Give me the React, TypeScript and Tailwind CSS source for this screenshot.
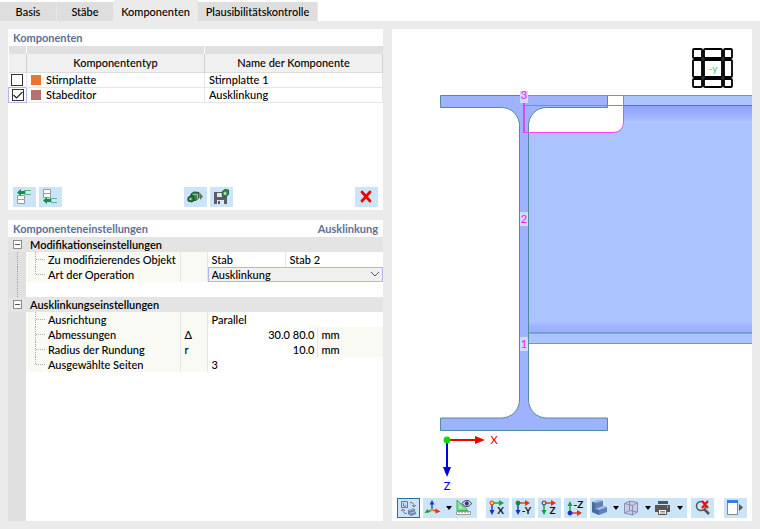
import { ReactNode, useState } from 'react'

type Component = {
  id: number
  type: string
  name: string
  color: string
  active: boolean
}

const tabs = [
  { label: 'Basis', width: 'w-[57px]' },
  { label: 'Stäbe', width: 'w-[57px]' },
  { label: 'Komponenten', width: 'w-[84px]' },
  { label: 'Plausibilitätskontrolle', width: 'w-[120px]' },
]

const initialComponents: Component[] = [
  { id: 1, type: 'Stirnplatte', name: 'Stirnplatte 1', color: 'bg-[#e87530]', active: false },
  { id: 2, type: 'Stabeditor', name: 'Ausklinkung', color: 'bg-[#b97070]', active: true },
]

function ToolButton({ label, pressed, children }: { label: string; pressed?: boolean; children: ReactNode }) {
  return (
    <button
      type="button"
      aria-label={label}
      aria-pressed={pressed}
      className={`block h-5 w-[23px] shrink-0 bg-[#cce4f7] hover:bg-[#b8daf5] ${pressed ? 'outline outline-1 -outline-offset-1 outline-[#2a6ca8]' : ''}`}
    >
      <svg viewBox="0 0 23 20" className="h-5 w-[23px]" fill="none">
        {children}
      </svg>
    </button>
  )
}

function MenuArrow({ label, className }: { label: string; className: string }) {
  return (
    <button type="button" aria-label={label} className={`flex h-5 shrink-0 items-center bg-[#cce4f7] ${className}`}>
      <svg viewBox="0 0 6 4" className="h-1 w-1.5">
        <path d="M0 0h6L3 4z" fill="#000" />
      </svg>
    </button>
  )
}

// Small coordinate cross, used by the four view direction buttons
function AxisIcon({ origin, ring, right, down, text, up }: { origin: string; ring: string; right: string; down: string; text: string; up?: boolean }) {
  const y = up ? 15 : 5
  return (
    <>
      <path d={`M6 ${y}h8`} stroke={right} strokeWidth="1.4" />
      <path d={`M13 ${y - 3}l5 3-5 3z`} fill={right} />
      {up ? (
        <>
          <path d="M6 15V7" stroke={down} strokeWidth="1.4" />
          <path d="M3.500 8L6 3l2.500 5z" fill={down} />
        </>
      ) : (
        <>
          <path d="M6 5v8" stroke={down} strokeWidth="1.4" />
          <path d="M3.500 12h5L6 17z" fill={down} />
        </>
      )}
      <circle cx="6" cy={y} r="2" fill={origin} stroke={ring} />
      <text x="14.500" y={up ? 10 : 16} textAnchor="middle" fontSize="10" fontWeight="700" fill="#111">
        {text}
      </text>
    </>
  )
}

function ComponentsPanel() {
  const [components, setComponents] = useState(initialComponents)

  const toggle = (id: number) => {
    setComponents(components.map((c) => (c.id === id ? { ...c, active: !c.active } : c)))
  }

  return (
    <section className="flex h-[181px] flex-col bg-white">
      <h2 className="h-[17px] px-[5px] font-bold leading-[17px] text-[#5d6f96]">Komponenten</h2>
      <table className="w-full table-fixed border-collapse">
        <colgroup>
          <col className="w-[18px]" />
          <col />
          <col />
        </colgroup>
        <thead>
          <tr className="h-2 bg-[#e0e0e0]">
            <td className="border-r border-white" />
            <td className="border-r border-white" />
            <td />
          </tr>
          <tr className="h-[18px] border-b border-[#dcdcdc] bg-[#f0f0f0]">
            <td className="border-r border-[#d0d0d0]" />
            <th className="border-r border-[#d0d0d0] p-0 font-medium">Komponententyp</th>
            <th className="border-r border-[#d0d0d0] p-0 font-medium">Name der Komponente</th>
          </tr>
        </thead>
        <tbody>
          {components.map((c) => (
            <tr key={c.id} className="h-[15px] border-b border-[#e6e6e6] leading-[14px]">
              <td className={`border-r p-0 ${c.active ? 'border border-[#b4b4ee]' : 'border-[#e6e6e6]'}`}>
                <span className="relative mx-auto block size-3">
                  <input
                    type="checkbox"
                    aria-label={c.type}
                    checked={c.active}
                    onChange={() => toggle(c.id)}
                    className="block size-3 appearance-none border border-[#333] bg-white"
                  />
                  {c.active && (
                    <svg viewBox="0 0 12 12" className="pointer-events-none absolute inset-0 size-3">
                      <path d="M1.500 6l3 3 6-6" fill="none" stroke="#222" strokeWidth="1.200" />
                    </svg>
                  )}
                </span>
              </td>
              <td className="border-r border-[#e6e6e6] p-0">
                <div className="flex items-center gap-[5px] pl-1">
                  <span className={`size-[10px] ${c.color}`} />
                  {c.type}
                </div>
              </td>
              <td className="border-r border-[#e6e6e6] py-0 pl-1">{c.name}</td>
            </tr>
          ))}
        </tbody>
      </table>

      <div className="mt-auto flex gap-[3px] px-[5px] pb-[3px]">
        <ToolButton label="Davor einfügen">
          <path d="M4.500 8.500h7v4h-7zM4.500 12.500h7v4h-7z" fill="#fff" stroke="#9a9a9a" />
          <path d="M11 3.500h7M12 7.500h6M12 3.500v4" stroke="#58b883" />
          <path d="M4 5.500l4-3.500v2h4v3H8v2z" fill="#0b9344" />
        </ToolButton>
        <ToolButton label="Danach einfügen">
          <path d="M4.500 2.500h7v4h-7zM4.500 6.500h7v4h-7z" fill="#fff" stroke="#9a9a9a" />
          <path d="M11 11.500h7M12 15.500h6M12 11.500v4" stroke="#58b883" />
          <path d="M4 13.500l4-3.500v2h4v3H8v2z" fill="#0b9344" />
        </ToolButton>
        <div className="flex flex-1 justify-center gap-[3px] pl-7 pr-7">
          <ToolButton label="Aus Bibliothek laden">
            <path d="M7 7l3-2 5 .5v5l-3 3-5-.5z" fill="#3a8a50" stroke="#1d4d2c" />
            <path d="M4 10.500l3-2 3 1v4l-2 1.500-4-1z" fill="#2b6f3e" stroke="#1d4d2c" />
            <circle cx="6.500" cy="12" r="1.200" fill="#a5d6b2" />
            <path d="M9 7.500h4.500v4" stroke="#8fc9a0" />
            <path d="M16 6l3 3.500-3 3.500z" fill="#6c6c6c" />
          </ToolButton>
          <ToolButton label="In Bibliothek speichern">
            <path d="M4 5h11l2 2v10H4z" fill="#5a5d66" />
            <path d="M7 6h5v4H7zM7 13h7v4H7z" fill="#dce9f5" />
            <path d="M8 14h2v3H8z" fill="#5a5d66" />
            <path d="M12 5l2.500-2.500 4 .5v4l-2 2.500-4-.5z" fill="#3a8a50" stroke="#246138" />
            <circle cx="15" cy="6.500" r="1.400" fill="#b5dfc0" />
          </ToolButton>
        </div>
        <ToolButton label="Löschen">
          <path d="M7 5l8 9M15 5l-8 9" stroke="#f20000" strokeWidth="2.800" strokeLinecap="round" />
        </ToolButton>
      </div>
    </section>
  )
}

function SettingsGroup({ title, children }: { title: string; children: ReactNode }) {
  const [open, setOpen] = useState(true)

  return (
    <table className="w-full table-fixed border-collapse leading-[15px]">
      <colgroup>
        <col className="w-[18px]" />
        <col className="w-[154px]" />
        <col className="w-[27px]" />
        <col />
      </colgroup>
      <thead>
        <tr className="h-[15px] bg-[#e4e4e4]">
          <th className="p-0">
            <button
              type="button"
              aria-label={title}
              aria-expanded={open}
              onClick={() => setOpen(!open)}
              className="mx-auto block size-[9px] border border-[#8c8c8c] bg-white"
            >
              <svg viewBox="0 0 7 7" className="size-[7px]">
                <path d="M1 3.500h5" stroke="#555" />
              </svg>
            </button>
          </th>
          <th colSpan={3} className="py-0 pl-1 text-left font-semibold">
            {title}
          </th>
        </tr>
      </thead>
      {open && <tbody>{children}</tbody>}
    </table>
  )
}

// Dotted trunk of the tree, runs from one group to the next
function TreeTrunk() {
  return (
    <svg viewBox="0 0 18 15" className="block h-[15px] w-[18px]" fill="none">
      <path d="M9.500 0v15" stroke="#a0a0a0" strokeDasharray="1 1" />
    </svg>
  )
}

type SettingRowProps = {
  label: string
  symbol?: string
  trunk?: boolean
  last?: boolean
  children: ReactNode
}

function SettingRow({ label, symbol, trunk, last, children }: SettingRowProps) {
  return (
    <tr className="h-[15px]">
      <td className="bg-[#e0e0e0] p-0">{trunk && <TreeTrunk />}</td>
      <th scope="row" className="whitespace-nowrap bg-[#f9faf4] p-0 text-left font-medium">
        <div className="flex">
          <svg viewBox="0 0 22 15" className="h-[15px] w-[22px] shrink-0" fill="none" stroke="#a8a8a8" strokeDasharray="1 1">
            <path d={last ? 'M9.500 0v8' : 'M9.500 0v15'} />
            <path d="M10 7.500h10" />
          </svg>
          {label}
        </div>
      </th>
      <td className="border-x border-[#e6e6e6] bg-[#f9faf4] py-0 pl-1">{symbol}</td>
      <td className="p-0">{children}</td>
    </tr>
  )
}

function UnitValue({ value, unit }: { value: string; unit: string }) {
  return (
    <div className="flex">
      <span className="w-[110px] border-r border-[#e6e6e6] pr-0.5 text-right">{value}</span>
      <span className="flex-1 bg-[#f9faf4] pl-1">{unit}</span>
    </div>
  )
}

function SettingsPanel() {
  return (
    <section className="flex flex-1 flex-col bg-white">
      <div className="flex h-[17px] justify-between px-[5px] font-bold leading-[17px] text-[#5d6f96]">
        <h2>Komponenteneinstellungen</h2>
        <span>Ausklinkung</span>
      </div>
      <SettingsGroup title="Modifikationseinstellungen">
        <SettingRow label="Zu modifizierendes Objekt" trunk>
          <div className="flex">
            <span className="w-[78px] border-r border-[#e6e6e6] pl-1">Stab</span>
            <span className="pl-1">Stab 2</span>
          </div>
        </SettingRow>
        <SettingRow label="Art der Operation" trunk last>
          <div className="relative">
            <select
              aria-label="Art der Operation"
              defaultValue="Ausklinkung"
              className="block h-[15px] w-full appearance-none border border-[#b4b4ee] bg-[#f0f0f0] pl-[3px] leading-[13px]"
            >
              <option>Ausklinkung</option>
            </select>
            <svg viewBox="0 0 10 6" className="pointer-events-none absolute right-[3px] top-1 h-1.5 w-2.5">
              <path d="M1 1l4 4 4-4" fill="none" stroke="#555" />
            </svg>
          </div>
        </SettingRow>
      </SettingsGroup>
      <div className="w-[18px] bg-[#e0e0e0]">
        <TreeTrunk />
      </div>
      <SettingsGroup title="Ausklinkungseinstellungen">
        <SettingRow label="Ausrichtung">
          <span className="block pl-1">Parallel</span>
        </SettingRow>
        <SettingRow label="Abmessungen" symbol="Δ">
          <UnitValue value="30.0 80.0" unit="mm" />
        </SettingRow>
        <SettingRow label="Radius der Rundung" symbol="r">
          <UnitValue value="10.0" unit="mm" />
        </SettingRow>
        <SettingRow label="Ausgewählte Seiten" last>
          <span className="block pl-1">3</span>
        </SettingRow>
      </SettingsGroup>
      <div className="w-[18px] flex-1 bg-[#e0e0e0]" />
    </section>
  )
}

function Model() {
  return (
    <svg viewBox="0 0 360 464" className="block w-full" fill="none">
      <defs>
        <linearGradient id="beam" x1="0" y1="0" x2="0" y2="1">
          <stop offset="0" stopColor="#8c9efc" />
          <stop offset="0.065" stopColor="#a6bcff" />
          <stop offset="0.070" stopColor="#abc3ff" />
          <stop offset="0.950" stopColor="#abc3ff" />
          <stop offset="0.970" stopColor="#9fb4ff" />
          <stop offset="1" stopColor="#98acff" />
        </linearGradient>
      </defs>

      {/* beam with notch */}
      <path d="M136 76h224v228H136z" fill="url(#beam)" />
      <path d="M136 66h224v10H136zM136 304h224v11H136z" fill="#abc4ff" />
      <path d="M136 66.500h224M136 314.500h224" stroke="#7099b8" />
      <path d="M136 76.500h224M136 304h224" stroke="#4d82a6" />
      <path d="M136 65h96v28a10 10 0 0 1-10 10h-86z" fill="#fff" />

      {/* column section */}
      <path
        d="M48.500 66.500h167v12h-61a18 18 0 0 0-18 18V371a18 18 0 0 0 18 18h61v12.500h-167V389h61a18 18 0 0 0 18-18V96.500a18 18 0 0 0-18-18h-61z"
        fill="#9fb2ff"
        stroke="#4f8c9c"
      />

      {/* notch outline */}
      <path d="M132 66.500h100M132 76.500h100M132 103.500h90a9.500 9.500 0 0 0 9.500-9.500V66" stroke="#ff40ff" />
      <path d="M132 66v38" stroke="#e02cf0" strokeWidth="1.500" />

      <path d="M128 62h8v12h-8zM128 183h8v14h-8zM128 308h8v14h-8z" fill="#cddcff" />
      <g fill="#f020f0" fontSize="11" textAnchor="middle">
        <text x="132" y="70">3</text>
        <text x="132" y="194">2</text>
        <text x="132" y="319">1</text>
      </g>

      {/* global axes */}
      <path d="M55 411h30" stroke="#f00000" strokeWidth="2" />
      <path d="M83 407l10 4-10 4z" fill="#f00000" />
      <path d="M55 411v30" stroke="#0000e6" strokeWidth="2" />
      <path d="M51 438h8l-4 10z" fill="#0000e6" />
      <circle cx="55" cy="411" r="3.500" fill="#10d810" />
      <text x="102" y="415" fill="#f00000" fontSize="11" textAnchor="middle">X</text>
      <text x="55" y="461" fill="#0000e6" fontSize="11" textAnchor="middle">Z</text>

      {/* view cube */}
      <g stroke="#000" strokeWidth="1.800" fill="#fff">
        <rect x="301" y="20" width="9" height="9" rx="1" />
        <rect x="312" y="20" width="18" height="9" rx="1" />
        <rect x="332" y="20" width="8" height="9" rx="1" />
        <rect x="301" y="31" width="9" height="17" rx="1" />
        <rect x="312" y="31" width="18" height="17" rx="1" />
        <rect x="332" y="31" width="8" height="17" rx="1" />
        <rect x="301" y="50" width="9" height="8" rx="1" />
        <rect x="312" y="50" width="18" height="8" rx="1" />
        <rect x="332" y="50" width="8" height="8" rx="1" />
      </g>
      <path d="M311 21v37M331 21v37M302 30h37M302 49h37" stroke="#000" />
      <text x="321" y="43" fill="#7cd67c" fontSize="10" fontWeight="700" textAnchor="middle">-y</text>
    </svg>
  )
}

function ViewToolbar() {
  return (
    <div className="mt-auto flex h-7 items-end px-[5px] pb-[3px]">
      <ToolButton label="Ansicht synchronisieren" pressed>
        <path d="M4.500 3.500h6v6h-6z" fill="#cfe0ff" stroke="#4b78e8" />
        <path d="M6.500 5v3h3" stroke="#4b78e8" />
        <path d="M13 4.500c3 0 4 1 4 4M15 7l2 2 2-2M10 15.500c-3 0-4-1-4-4M4 13l2-2 2 2" stroke="#777" />
        <path d="M11 12l5-2 2 1v2l1 1v2l-5 2-3-2z" fill="#6f83a8" />
        <path d="M11 12l5-2 2 1-5 2zM12 15l6-2 1 1-5 2z" fill="#a9bad6" />
      </ToolButton>
      <div className="ml-[3px] flex">
        <ToolButton label="Achsen">
          <path d="M9 12V5" stroke="#1540d8" strokeWidth="1.400" />
          <path d="M6.500 6.500L9 2l2.500 4.500z" fill="#1540d8" />
          <path d="M9 12l-4 1.500" stroke="#169c3c" strokeWidth="1.400" />
          <path d="M1.500 15l3-4 2 3.500z" fill="#169c3c" />
          <path d="M9 12l5 1" stroke="#e0341c" strokeWidth="1.400" />
          <path d="M12.500 10.500l5 3-5 2z" fill="#e0341c" />
          <circle cx="9" cy="12" r="1.500" fill="#f0a020" />
        </ToolButton>
        <MenuArrow label="Achsen wählen" className="w-2" />
        <ToolButton label="Sichtbarkeit">
          <path d="M3 2v10.500h11z" fill="#8fdc96" stroke="#45ac55" />
          <path d="M5.500 8v2h2z" fill="#fff" />
          <path d="M2.500 13.500h14v3h-14z" fill="#fff" stroke="#9a9a9a" />
          <path d="M5 14v1M8 14v1M11 14v1M14 14v1" stroke="#777" />
          <path d="M8 5.500c3-4 7-4 9.500 0-2.500 4-6.500 4-9.500 0z" fill="#d7d9ef" stroke="#35355c" />
          <circle cx="12.800" cy="5.500" r="2" fill="#35357a" />
        </ToolButton>
      </div>
      <div className="ml-[9px] flex gap-[3px]">
        <ToolButton label="Ansicht X">
          <AxisIcon origin="#ffe35a" ring="#e0301e" right="#1ea345" down="#1530c4" text="X" />
        </ToolButton>
        <ToolButton label="Ansicht -Y">
          <AxisIcon origin="#12883a" ring="#12883a" right="#e0341c" down="#1530c4" text="-Y" />
        </ToolButton>
        <ToolButton label="Ansicht Z">
          <AxisIcon origin="#ffe35a" ring="#1530c4" right="#e0341c" down="#169c3c" text="Z" />
        </ToolButton>
        <ToolButton label="Ansicht -Z">
          <AxisIcon origin="#1530c4" ring="#1530c4" right="#e0341c" down="#169c3c" text="-Z" up />
        </ToolButton>
      </div>
      <div className="ml-[3px] flex">
        <ToolButton label="Darstellung">
          <path d="M2 4l7-2 4 1v5l4 1v5l-8 3-7-3z" fill="#5f80b4" />
          <path d="M2 4l7-2 4 1-8 2zM5 11l8-3 4 1-8 3z" fill="#a6c0e6" />
          <path d="M2 4l3 1v6l4 1v5l-7-3z" fill="#4a6aa2" />
        </ToolButton>
        <MenuArrow label="Darstellung wählen" className="w-[9px]" />
        <ToolButton label="Transparenz">
          <path d="M2.500 5.500l5-2.500 8 1.500v9.500l-5 3-8-2z" fill="#c4cce6" stroke="#8b8fb4" />
          <path d="M2.500 5.500l8 2v9.500M10.500 7.500l5-3M7.500 3v9.500l-5 2.500M7.500 12.500l8 1.500" stroke="#8b8fb4" />
        </ToolButton>
        <MenuArrow label="Transparenz wählen" className="w-[9px]" />
        <ToolButton label="Drucken">
          <path d="M4 3h10v3H4z" fill="#555" />
          <path d="M1 7h15v7H1z" fill="#555" />
          <path d="M4.500 11.500h8v5h-8z" fill="#fff" stroke="#555" />
          <path d="M6 13.500h5M6 15h5" stroke="#888" />
          <path d="M13 9h1" stroke="#fff" />
        </ToolButton>
        <MenuArrow label="Druckoptionen" className="w-[10px]" />
      </div>
      <div className="ml-1">
        <ToolButton label="Auswahl aufheben">
          <circle cx="10" cy="8" r="4.500" stroke="#555" strokeWidth="1.500" />
          <path d="M13 11l5 5" stroke="#555" strokeWidth="2.500" />
          <path d="M11 3l6 7M17 3l-6 7" stroke="#f01010" strokeWidth="2.200" />
        </ToolButton>
      </div>
      <div className="ml-auto">
        <ToolButton label="Fenster lösen">
          <path d="M3.500 3.500h10v13h-10z" fill="#fff" stroke="#888" />
          <path d="M3 2h11v3H3z" fill="#3d78e8" />
          <path d="M15 6l4 3.500-4 3.500z" fill="#555" />
        </ToolButton>
      </div>
    </div>
  )
}

export default function App() {
  const [activeTab, setActiveTab] = useState('Komponenten')

  return (
    <div className="flex min-h-screen flex-col bg-[#ebebeb] font-['Lato','Open_Sans',sans-serif] text-[11px] font-medium text-black">
      <div role="tablist" className="flex h-[21px] items-end bg-white">
        {tabs.map((tab) => (
          <button
            key={tab.label}
            type="button"
            role="tab"
            aria-selected={tab.label === activeTab}
            onClick={() => setActiveTab(tab.label)}
            className={`shrink-0 whitespace-nowrap border-r border-[#e8e8e8] ${tab.width} ${
              tab.label === activeTab ? 'h-[21px] bg-[#ebebeb] pt-[3px]' : 'h-[19px] bg-[#dedede] pt-px'
            }`}
          >
            {tab.label}
          </button>
        ))}
      </div>

      <main className="grid flex-1 grid-cols-[375fr_360fr] gap-[9px] p-2">
        <div className="flex flex-col gap-[10px]">
          <ComponentsPanel />
          <SettingsPanel />
        </div>
        <section className="flex flex-col bg-white">
          <Model />
          <ViewToolbar />
        </section>
      </main>
    </div>
  )
}
